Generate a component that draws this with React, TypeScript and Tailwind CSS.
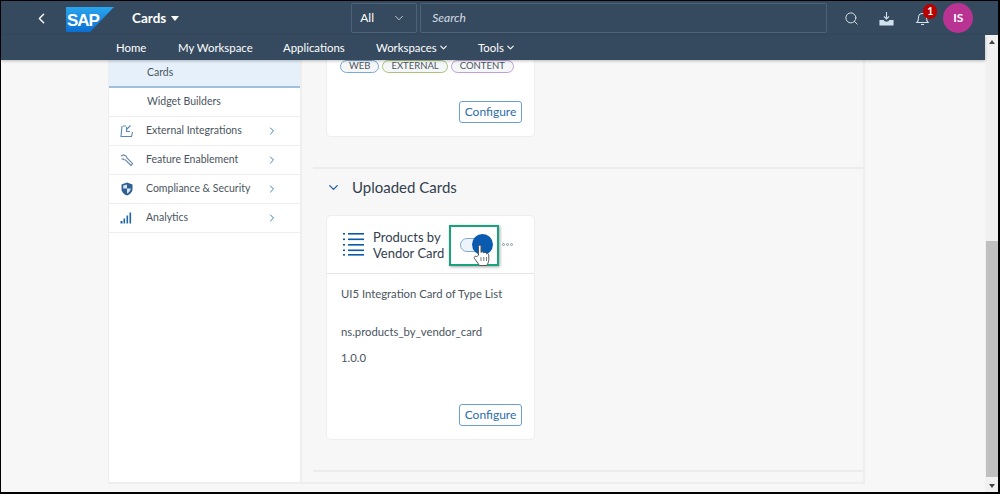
import { ChevronDown, ChevronLeft, ChevronRight, Search } from "lucide-react";

const FONT = "font-['Lato','Open_Sans',sans-serif]";

const NAV_ITEMS = [
  { label: "Home", caret: false, width: "w-[62px]" },
  { label: "My Workspace", caret: false, width: "w-[105px]" },
  { label: "Applications", caret: false, width: "w-[93px]" },
  { label: "Workspaces", caret: true, width: "w-[102px]" },
  { label: "Tools", caret: true, width: "w-[60px]" },
];

function SapLogo() {
  return (
    <svg width="48" height="25" viewBox="0 0 48 25">
      <defs>
        <linearGradient id="sapBlue" x1="0" y1="0" x2="0" y2="1">
          <stop offset="0" stopColor="#2aa6ee" />
          <stop offset="1" stopColor="#0a6ed1" />
        </linearGradient>
      </defs>
      <path d="M0 0H48L24 25H0Z" fill="url(#sapBlue)" />
      <text x="1" y="19" fontFamily="Liberation Sans, sans-serif" fontWeight="700" fontSize="17" letterSpacing="-1" fill="#fff">
        SAP
      </text>
    </svg>
  );
}

function ExternalIcon() {
  return (
    <svg width="14" height="14" viewBox="0 0 14 14" fill="none" stroke="#5b87b5" strokeWidth="1.1">
      <path d="M3 2H6M2 2L1 12.5H11.5L12.5 8" />
      <path d="M10.5 1.5L6.5 5.5M6.5 3V7.5H10" />
    </svg>
  );
}

function WrenchIcon() {
  return (
    <svg width="14" height="14" viewBox="0 0 14 14" fill="none" stroke="#6f8fb0" strokeWidth="1.2">
      <path d="M1 3L3.5 2L6 3L7 5L12.5 10.5L11 12.5L5.5 7L3 6.5" />
      <path d="M1.5 6H4" />
    </svg>
  );
}

function ShieldIcon() {
  return (
    <svg width="14" height="14" viewBox="0 0 14 14">
      <path d="M7 .5L12.5 2.5V7C12.5 10 10 12.5 7 13.5C4 12.5 1.5 10 1.5 7V2.5Z" fill="#2f5f93" />
      <path d="M7 2.5V6.5H3.2V3.6ZM7 6.5H10.8C10.6 8.8 9 10.6 7 11.5Z" fill="#d8e6f3" />
    </svg>
  );
}

function BarsIcon() {
  return (
    <svg width="12" height="12" viewBox="0 0 12 12" fill="#1f66ab">
      <rect x="0.5" y="9" width="2" height="2.5" />
      <rect x="3.5" y="6.5" width="1.6" height="5" />
      <rect x="6.5" y="3.5" width="1.6" height="8" />
      <rect x="9.5" y="0.5" width="1.6" height="11" />
    </svg>
  );
}

const SIDE_ITEMS = [
  { label: "External Integrations", icon: <ExternalIcon /> },
  { label: "Feature Enablement", icon: <WrenchIcon /> },
  { label: "Compliance & Security", icon: <ShieldIcon /> },
  { label: "Analytics", icon: <BarsIcon /> },
];

function ListIcon() {
  return (
    <svg width="21" height="25" viewBox="0 0 21 25" fill="#0a5aa8">
      {[1, 6.5, 12, 17.5, 22].map((y) => (
        <g key={y}>
          <rect x="0" y={y} width="2" height="1.6" />
          <rect x="5" y={y} width="16" height="1.6" />
        </g>
      ))}
    </svg>
  );
}

function HandCursor() {
  return (
    <svg width="17" height="22" viewBox="0 0 17 22" fill="#fff" stroke="#555" strokeWidth="1">
      <path d="M5.5 11V2.5C5.5 0.8 8 0.8 8 2.5V8.5C8.5 7.5 10.5 7.5 10.8 9C11.5 8 13.3 8.3 13.5 9.8C14.3 9.2 15.8 9.6 15.8 11V15.5C15.8 18 14.5 20.5 13.5 21.5H6.5L1.5 14.5C0.5 12.8 2.5 11.5 3.8 12.8Z" />
      <path d="M8 13V17M10.8 13V17M13.5 13V17" strokeWidth="0.8" />
    </svg>
  );
}

function Configure() {
  return (
    <button className="h-[22px] w-[63px] rounded-[3px] border border-[#6b9fd1] bg-white text-[12px] text-[#2b6cab]">
      Configure
    </button>
  );
}

function Tag({ label, border }: { label: string; border: string }) {
  return (
    <span className={`flex h-[13px] items-center rounded-full border bg-[#f5f6f7] px-[8px] text-[9.5px] text-[#4a5560] ${border}`}>
      {label}
    </span>
  );
}

export default function App() {
  return (
    <div className={`${FONT} flex h-[494px] w-[1000px] flex-col overflow-hidden border-t border-l border-r-2 border-b-2 border-black bg-[#f7f7f7]`}>
      {/* Top bar */}
      <header className="flex h-[34px] shrink-0 items-center bg-[#354a5f] text-white">
        <ChevronLeft size={17} strokeWidth={2} className="ml-[32px]" />
        <div className="ml-[16px] mt-[2px]">
          <SapLogo />
        </div>
        <span className="ml-[18px] text-[13.5px] font-bold">Cards</span>
        <span className="ml-[5px] mt-[1px] h-0 w-0 border-x-[4px] border-t-[5px] border-x-transparent border-t-white" />
        <div className="ml-[172px] flex h-[30px] w-[66px] items-center justify-between rounded-[2px] border border-[#4c6278] pl-[8px] pr-[10px] text-[12px]">
          All
          <ChevronDown size={14} strokeWidth={1.2} />
        </div>
        <div className="ml-[3px] flex h-[30px] w-[407px] items-center rounded-[2px] border border-[#4c6278] px-[11px] text-[12px] italic text-[#d5dde5]">
          Search
        </div>
        <Search size={15} strokeWidth={1.5} className="ml-[17px] text-[#dfe8f0]" />
        <svg width="15" height="15" viewBox="0 0 15 15" fill="none" stroke="#cfe0ef" strokeWidth="1.1" className="ml-[20px]">
          <path d="M7.5 1V8M5 5.5L7.5 8L10 5.5" />
          <path d="M1 9.5H4.5L5.5 11H9.5L10.5 9.5H14V14H1Z" fill="#cfe0ef" />
        </svg>
        <div className="relative ml-[21px]">
          <svg width="15" height="15" viewBox="0 0 15 15" fill="none" stroke="#cfe0ef" strokeWidth="1.1">
            <path d="M2 11.5C3.2 10.5 3.5 9 3.5 6.5C3.5 4 5 2.5 7.5 2.5C10 2.5 11.5 4 11.5 6.5C11.5 9 11.8 10.5 13 11.5Z" />
            <path d="M6 13.5H9" />
          </svg>
          <span className="absolute left-[8px] top-[-7px] flex h-[15px] w-[14px] items-center justify-center rounded-[7px] bg-[#bb0000] text-[10.5px] font-bold leading-none">
            1
          </span>
        </div>
        <div className="ml-[13px] flex h-[30px] w-[30px] items-center justify-center rounded-full bg-[#b83392] text-[12px] font-bold">
          IS
        </div>
      </header>

      <div className="flex min-h-0 flex-1">
        <div className="flex min-w-0 flex-1 flex-col">
          {/* Nav row */}
          <nav className="relative z-10 flex h-[25px] shrink-0 items-center bg-[#354a5f] pl-[115px] text-[11.4px] text-white shadow-[0_1px_3px_rgba(0,0,0,0.25)]">
            {NAV_ITEMS.map((item) => (
              <span key={item.label} className={`flex items-center gap-[1px] ${item.width}`}>
                {item.label}
                {item.caret && <ChevronDown size={11} strokeWidth={2.4} />}
              </span>
            ))}
          </nav>

          {/* Page */}
          <div className="flex min-h-0 flex-1 pb-[8px] pl-[107px]">
            <div className="flex w-[757px] border-r-2 border-b-2 border-l border-[#eeeeee]">
              {/* Sidebar */}
              <aside className="w-[193px] shrink-0 border-r-2 border-[#eeeeee] bg-white text-[10.5px] text-[#4a5560]">
                <div className="flex h-[28px] items-center border-b-2 border-[#9fbfdc] bg-[#e5f0fa] pl-[38px]">Cards</div>
                <div className="flex h-[29px] items-center border-b border-[#eeeeee] pl-[38px]">Widget Builders</div>
                {SIDE_ITEMS.map((item) => (
                  <div key={item.label} className="flex h-[29px] items-center border-b border-[#eeeeee] pl-[11px]">
                    <span className="flex w-[26px] shrink-0 items-center">{item.icon}</span>
                    <span className="w-[120px]">{item.label}</span>
                    <ChevronRight size={12} strokeWidth={1.8} className="text-[#2b6cab]" />
                  </div>
                ))}
              </aside>

              {/* Main */}
              <main className="min-w-0 flex-1 pl-[11px]">
                <div className="ml-[13px] flex h-[77px] w-[209px] flex-col justify-between rounded-b-[5px] border border-t-0 border-[#eeeeee] bg-white pb-[13px] pr-[12px] pl-[13px]">
                  <div className="flex gap-[3px]">
                    <Tag label="WEB" border="border-[#7aa9d6]" />
                    <Tag label="EXTERNAL" border="border-[#a8c47c]" />
                    <Tag label="CONTENT" border="border-[#bd9fdc]" />
                  </div>
                  <div className="flex justify-end">
                    <Configure />
                  </div>
                </div>

                <div className="mt-[30px] flex h-[38px] items-center border-t-2 border-[#ececec] pl-[13px] text-[15px] text-[#32404e]">
                  <ChevronDown size={15} strokeWidth={2} className="text-[#1c5c9b]" />
                  <span className="ml-[11px]">Uploaded Cards</span>
                </div>

                <div className="ml-[13px] mt-[10px] h-[225px] w-[209px] rounded-[5px] border border-[#eeeeee] bg-white">
                  <div className="relative flex h-[58px] items-center border-b border-[#e5e5e5] pl-[16px]">
                    <ListIcon />
                    <span className="ml-[9px] w-[76px] text-[13px] leading-[16px] text-[#32404e]">
                      Products by Vendor Card
                    </span>
                    <span className="relative ml-[11px] h-[14px] w-[30px] rounded-full border border-[#7aa9d6] bg-[#eef4fa]">
                      <span className="absolute left-[11px] top-[-5px] h-[21px] w-[21px] rounded-full bg-[#0a5ab0]" />
                    </span>
                    <span className="ml-[12px] flex gap-[1px]">
                      <span className="h-[3px] w-[3px] rounded-full border border-[#7d95ad]" />
                      <span className="h-[3px] w-[3px] rounded-full border border-[#7d95ad]" />
                      <span className="h-[3px] w-[3px] rounded-full border border-[#7d95ad]" />
                    </span>
                    {/* Highlight annotation and pointer */}
                    <span className="absolute left-[122px] top-[9px] h-[41px] w-[50px] border-2 border-[#19a27e] shadow-[1px_1px_3px_rgba(0,0,0,0.35)]" />
                    <span className="absolute left-[146px] top-[28px]">
                      <HandCursor />
                    </span>
                  </div>
                  <div className="flex h-[165px] flex-col pl-[14px] pr-[12px] text-[11.3px] text-[#4a5560]">
                    <p className="mt-[12px]">UI5 Integration Card of Type List</p>
                    <p className="mt-[21px]">ns.products_by_vendor_card</p>
                    <p className="mt-[9px]">1.0.0</p>
                    <div className="mt-auto mb-[13px] flex justify-end">
                      <Configure />
                    </div>
                  </div>
                </div>

                <div className="mt-[30px] border-t-2 border-[#ececec]" />
              </main>
            </div>
          </div>
        </div>

        {/* Scrollbar */}
        <div className="flex w-[13px] shrink-0 flex-col items-center bg-[#f1f1f1]">
          <span className="mt-[5px] h-0 w-0 border-x-[3px] border-b-[4px] border-x-transparent border-b-[#444]" />
          <div className="mt-[197px] h-[236px] w-[12px] bg-[#c0c0c0]" />
          <span className="mt-[7px] h-0 w-0 border-x-[3px] border-t-[4px] border-x-transparent border-t-[#444]" />
        </div>
      </div>
    </div>
  );
}
